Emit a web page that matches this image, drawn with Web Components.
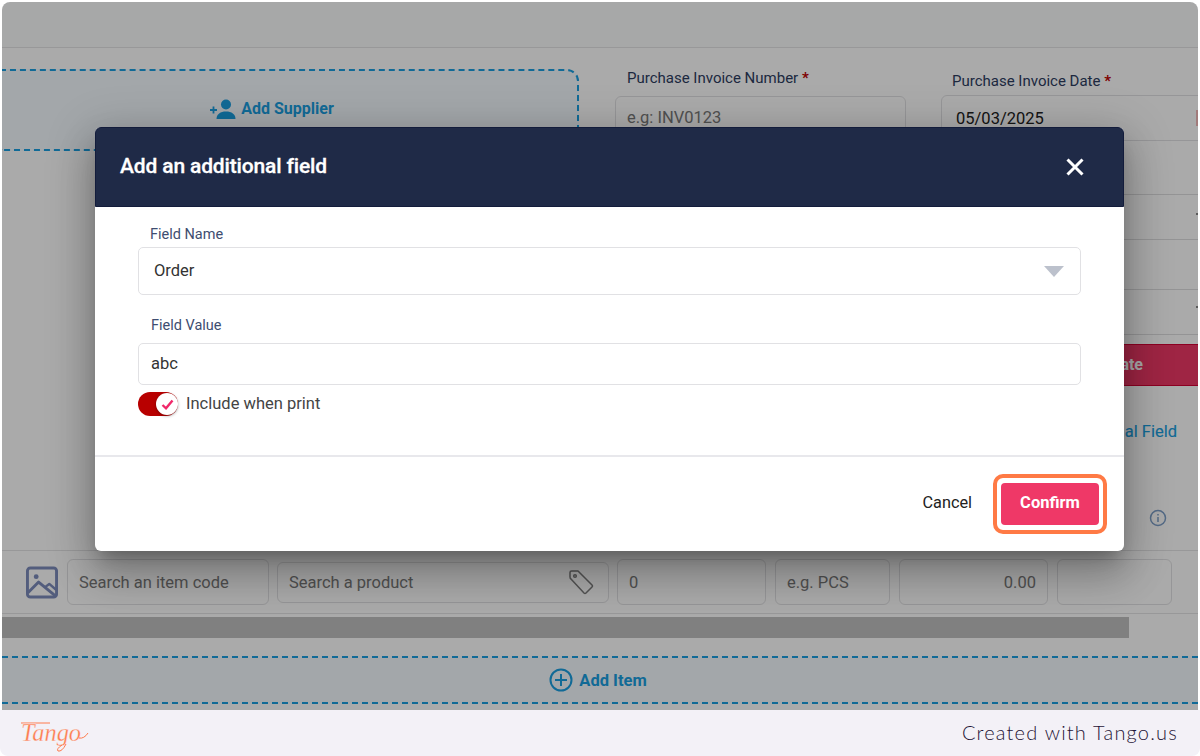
<!DOCTYPE html>
<html>
<head>
<meta charset="utf-8">
<title>Add an additional field</title>
<style>
  html, body { margin: 0; padding: 0; background: #fff; }
  body { font-family: Roboto, "Liberation Sans", sans-serif; width: 1200px; height: 756px; overflow: hidden; }
</style>
</head>
<body>
<shot-frame>
  <invoice-page></invoice-page>
  <add-field-dialog slot="over"></add-field-dialog>
</shot-frame>
<script>
(function() {
  // small helper, every element here is just a template + shadow root
  function define(name, html, extra) {
    const template = document.createElement('template');
    template.innerHTML = html;
    class El extends HTMLElement {
      constructor() {
        super();
        this.attachShadow({ mode: 'open' });
        this.shadowRoot.appendChild(template.content.cloneNode(true));
      }
      connectedCallback() {
        this.shadowRoot.querySelectorAll('[data-attr]').forEach(n => {
          n.textContent = this.getAttribute(n.dataset.attr) || '';
        });
        if (extra) extra(this);
      }
    }
    customElements.define(name, El);
  }

  define('shot-frame', `
    <style>
      :host { display: flex; flex-direction: column; width: 1200px; height: 756px; }
      .stage { position: relative; height: 708px; margin: 2px 2px 0; border-radius: 8px 8px 0 0; overflow: hidden; background: #fff; }
      .scrim { position: absolute; inset: 0; background: rgba(0,0,0,.335); }
    </style>
    <div class="stage">
      <slot></slot>
      <div class="scrim"></div>
      <slot name="over"></slot>
    </div>
    <tango-footer></tango-footer>
  `);

  define('tango-footer', `
    <style>
      :host { display: flex; flex: 1; align-items: center; justify-content: space-between; background: #f3f1f7; border-radius: 0 0 8px 8px; padding: 0 22px 0 20px; }
      .logo { position: relative; width: 68px; height: 32px; margin-top: 4px; }
      svg { display: block; overflow: visible; }
      text.mark { font-family: "Liberation Serif", serif; font-style: italic; font-size: 26px; fill: #ff7b4d; stroke: #f3f1f7; stroke-width: .3px; }
      .made { font-family: Lato, "Open Sans", sans-serif; font-size: 20px; font-weight: 300; letter-spacing: 1.2px; color: #1f1436; margin-top: -2px; }
    </style>
    <div class="logo">
      <svg width="68" height="32" viewBox="0 0 68 32">
        <path d="M1 4 H30" fill="none" stroke="#ff7b4d" stroke-width="1"/>
        <text class="mark" x="1" y="22" textLength="60" lengthAdjust="spacingAndGlyphs">Tango</text>
        <path d="M59 19 Q64 20 68 14" fill="none" stroke="#ff7b4d" stroke-width="1"/>
        <path d="M46 25 Q42 33 38 32 Q36 30 42 26" fill="none" stroke="#ff7b4d" stroke-width="1"/>
      </svg>
    </div>
    <span class="made">Created with Tango.us</span>
  `);

  define('bg-input', `
    <style>
      :host { display: flex; align-items: center; box-sizing: border-box; height: 46px; padding: 0 11px; border: 1px solid #e2e2e4; border-radius: 6px; background: #fff; font-size: 16.500px; color: #7a7a7a; flex: none; }
      span { flex: 1; }
      :host([align=right]) span { text-align: right; }
      ::slotted(*) { flex: none; }
    </style>
    <span data-attr="text"></span><slot></slot>
  `);

  define('dash-add', `
    <style>
      :host { display: flex; align-items: center; justify-content: center; gap: 6px; box-sizing: border-box; background: #f5fbff; color: #1a9fe2; font-size: 16px; font-weight: 700; }
      ::slotted(svg) { flex: none; }
    </style>
    <slot></slot><span data-attr="text"></span>
  `);

  define('invoice-page', `
    <style>
      :host { display: flex; flex-direction: column; height: 708px; background: #fff; color: #2d3d5f; }
      .top { flex: none; height: 45px; background: #fbfcfd; border-bottom: 1px solid #e4e4e6; }
      .form { flex: none; display: flex; height: 502px; border-bottom: 1px solid #e4e4e6; overflow: hidden; }
      .left { flex: none; width: 577px; padding-top: 21px; }
      .supplier { margin-left: -3px; height: 82px; box-sizing: border-box; border: 2px dashed #1a9fe2; border-radius: 0 12px 12px 0; padding: 0 35px 3px 0; gap: 5px; }
      .num { flex: none; width: 291px; margin-left: 36px; padding-top: 21px; }
      .date { flex: none; width: 270px; margin-left: 35px; padding-top: 24px; }
      .lbl { height: 18px; line-height: 18px; font-size: 15px; padding-left: 12px; }
      .lbl b { color: #c00000; font-weight: 700; }
      .num .lbl { margin-bottom: 9px; }
      .num bg-input { padding-bottom: 3px; }
      .date .lbl { margin-bottom: 5px; padding-left: 11px; }
      .date bg-input { padding-left: 14px; color: #222; width: 270px; }
      .cal { width: 3px; height: 16px; background: #f2b9b9; }
      .stack > div { box-sizing: border-box; border-bottom: 1px solid #dedee0; }
      .tick { width: 3px; height: 2px; margin-left: 255px; background: #888; }
      .gen { box-sizing: border-box; width: 270px; height: 42px; margin-top: 9px; padding-right: 67px; background: #ef3867; border: 1px solid #d40033; color: #fff; font-size: 16px; font-weight: 700; text-align: right; line-height: 40px; }
      .more { width: 236px; margin-top: 37px; height: 18px; line-height: 18px; text-align: right; color: #1a9fe2; font-size: 16.500px; -webkit-text-stroke: .15px #1a9fe2; }
      .info { display: block; margin: 68px 0 0 208px; }
      .items { flex: none; display: flex; align-items: center; gap: 8px; height: 62px; padding-left: 24px; border-bottom: 1px solid #e4e4e6; }
      .items svg.pic { flex: none; margin-right: 1px; }
      .bar { flex: none; height: 21px; margin-top: 3px; background: #fff; }
      .thumb { width: 1127px; height: 21px; background: #c1c1c1; }
      .addrow { flex: none; height: 48px; margin-top: 18px; border-top: 2px dashed #1a9fe2; border-bottom: 2px dashed #1a9fe2; gap: 6px; padding-right: 4px; font-size: 16.500px; }
    </style>
    <div class="top"></div>
    <div class="form">
      <div class="left">
        <dash-add class="supplier" text="Add Supplier">
          <svg width="27" height="22" viewBox="0 0 27 22"><path d="M1 12h7M4.500 8.500v7" stroke="#1a9fe2" stroke-width="1.800" fill="none"/><circle cx="17" cy="6.500" r="5" fill="#1a9fe2"/><path d="M7.500 21c0-5 4-7.500 9.500-7.500s9.500 2.500 9.500 7.500z" fill="#1a9fe2"/></svg>
        </dash-add>
      </div>
      <div class="num">
        <div class="lbl">Purchase Invoice Number <b>*</b></div>
        <bg-input text="e.g: INV0123"></bg-input>
      </div>
      <div class="date">
        <div class="lbl">Purchase Invoice Date <b>*</b></div>
        <bg-input text="05/03/2025"><div class="cal"></div></bg-input>
        <div class="stack">
          <div style="height:54px"></div>
          <div style="height:45px;padding-top:18px"><div class="tick"></div></div>
          <div style="height:50px"></div>
          <div style="height:45px;padding-top:16px"><div class="tick"></div></div>
        </div>
        <div class="gen">Generate</div>
        <div class="more">Additional Field</div>
        <svg class="info" width="18" height="18" viewBox="0 0 18 18" fill="none" stroke="#7d9fc9" stroke-width="1.500"><circle cx="9" cy="9" r="7.500"/><path d="M9 8v5M9 5v1.500"/></svg>
      </div>
    </div>
    <div class="items">
      <svg class="pic" width="32" height="33" viewBox="0 0 33 33" fill="none" stroke="#7d8cbc" stroke-width="3" stroke-linejoin="round"><rect x="1.500" y="1.500" width="30" height="30" rx="3"/><circle cx="10.500" cy="10.500" r="2.500" fill="#7d8cbc" stroke="none"/><path d="M2 27 L13 16 L30 30"/><path d="M20 21 L24 18 L31 24" stroke-width="2.500"/></svg>
      <bg-input text="Search an item code" style="width:202px"></bg-input>
      <bg-input text="Search a product" style="width:332px;height:41px;padding-right:14px">
        <svg width="26" height="26" viewBox="0 0 26 26" fill="none" stroke="#7e7e7e" stroke-width="1.500" stroke-linejoin="round"><path d="M2 3.500 Q2 2 3.500 2 H10 L24 16 Q25 17 24 18 L18 24 Q17 25 16 24 L3 10 Q2 9.500 2 8z"/><circle cx="7" cy="7" r="1.300"/></svg>
      </bg-input>
      <bg-input text="0" style="width:149px"></bg-input>
      <bg-input text="e.g. PCS" style="width:115px;margin-left:1px"></bg-input>
      <bg-input text="0.00" align="right" style="width:149px;margin-left:1px"></bg-input>
      <bg-input style="width:115px;margin-left:1px"></bg-input>
    </div>
    <div class="bar"><div class="thumb"></div></div>
    <dash-add class="addrow" text="Add Item">
      <svg width="24" height="24" viewBox="0 0 24 24" fill="none" stroke="#1a9fe2" stroke-width="2"><circle cx="12" cy="12" r="10.500"/><path d="M12 6v12M6 12h12"/></svg>
    </dash-add>
  `);

  define('dialog-field', `
    <style>
      :host { display: block; }
      .lbl { height: 18px; line-height: 20px; font-size: 14.500px; color: #3e4d70; }
      .box { display: flex; align-items: center; box-sizing: border-box; margin-top: var(--gap, 4px); height: var(--box, 42px); padding: 0 16px 0 var(--pad, 12px); border: 1px solid #e1e1e4; border-radius: 5px; font-size: 16.500px; color: #333; background: #fff; }
      .box span { flex: 1; margin-top: -2px; }
    </style>
    <div class="lbl" data-attr="label" part="label"></div>
    <div class="box"><span data-attr="value"></span><slot></slot></div>
  `);

  define('switch-toggle', `
    <style>
      :host { display: flex; align-items: center; gap: 8px; height: 24px; font-size: 16.500px; color: #444; }
      .track { position: relative; width: 40px; height: 24px; border-radius: 12px; background: #b80000; flex: none; }
      .knob { position: absolute; right: 0; top: 1px; width: 22px; height: 22px; border-radius: 50%; background: #fff; box-shadow: 0 1px 3px rgba(0,0,0,.35); display: flex; align-items: center; justify-content: center; }
      span { margin-top: -2px; }
    </style>
    <div class="track"><div class="knob">
      <svg width="13" height="11" viewBox="0 0 13 11" fill="none" stroke="#f0286a" stroke-width="2.400"><path d="M1.500 6 L5 9.300 L11.500 1.500"/></svg>
    </div></div>
    <span><slot></slot></span>
  `);

  define('add-field-dialog', `
    <style>
      :host { position: absolute; left: 93px; top: 125px; width: 1029px; height: 424px; display: flex; flex-direction: column; background: #fff; border-radius: 6px; overflow: visible;
        box-shadow: 0 11px 15px -7px rgba(0,0,0,.25), 0 24px 38px 3px rgba(0,0,0,.18), 0 9px 46px 8px rgba(0,0,0,.16); }
      header { flex: none; display: flex; align-items: center; justify-content: space-between; box-sizing: border-box; height: 80px; padding: 0 39px 0 24px; background: #1f2a47; border: 1px solid #131c3b; border-radius: 6px 6px 0 0; color: #fff; }
      h1 { margin: 0 0 3px; font-size: 21px; font-weight: 500; letter-spacing: -.15px; -webkit-text-stroke: .3px #fff; }
      .body { flex: none; box-sizing: border-box; height: 248px; padding: 18px 43px 0; }
      .name { --box: 48px; --pad: 15px; --gap: 4px; }
      .name::part(label) { padding-left: 12px; }
      .value { --box: 42px; --pad: 12px; --gap: 9px; margin-top: 21px; }
      .value::part(label) { padding-left: 13px; }
      switch-toggle { margin-top: 7px; }
      footer { flex: 1; display: flex; align-items: flex-start; justify-content: flex-end; gap: 21px; padding: 17px 17px 0 0; border-top: 2px solid #e8e8ec; }
      .cancel { font-size: 16.300px; line-height: 19px; margin-top: 19px; color: #222; }
      .ring { border: 4px solid #ff7a45; border-radius: 10px; padding: 5px 4px; background: #fff; }
      .confirm { width: 98px; height: 42px; display: flex; align-items: center; justify-content: center; box-sizing: border-box; padding-bottom: 3px; border-radius: 4px; background: #ef3867; color: #fff; font-size: 16.500px; font-weight: 700; }
    </style>
    <header>
      <h1>Add an additional field</h1>
      <svg width="18" height="18" viewBox="0 0 18 18" fill="none" stroke="#fff" stroke-width="3"><path d="M1.500 1.500 L16.500 16.500 M16.500 1.500 L1.500 16.500"/></svg>
    </header>
    <div class="body">
      <dialog-field class="name" label="Field Name" value="Order">
        <svg width="20" height="11" viewBox="0 0 20 11"><path d="M0 0H20L10 11z" fill="#bcc1cc"/></svg>
      </dialog-field>
      <dialog-field class="value" label="Field Value" value="abc"></dialog-field>
      <switch-toggle>Include when print</switch-toggle>
    </div>
    <footer>
      <span class="cancel">Cancel</span>
      <div class="ring"><div class="confirm">Confirm</div></div>
    </footer>
  `);
})();
</script>
</body>
</html>
